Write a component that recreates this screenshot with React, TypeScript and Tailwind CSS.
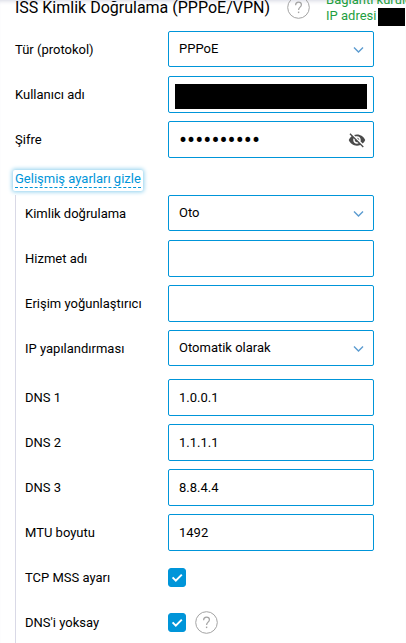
import { useState, type ReactNode } from "react"

const controlClass =
  "block w-full rounded-xs border border-[#0095d9] bg-white px-[10px] text-black outline-none"

function Chevron() {
  return (
    <svg
      className="pointer-events-none absolute top-1/2 right-[10px] -translate-y-1/2"
      width="11"
      height="7"
      viewBox="0 0 11 7"
      fill="none"
      stroke="#5b9bd0"
      strokeWidth="1.4"
    >
      <path d="M1 1l4.5 4.5L10 1" />
    </svg>
  )
}

function EyeOff() {
  return (
    <svg width="18" height="18" viewBox="0 0 24 24" fill="#4a4a4a">
      <path d="M12 7c2.76 0 5 2.24 5 5 0 .65-.13 1.26-.36 1.83l2.92 2.92c1.51-1.26 2.7-2.89 3.43-4.75-1.73-4.39-6-7.5-11-7.5-1.4 0-2.74.25-3.98.7l2.16 2.16C10.74 7.13 11.35 7 12 7zM2 4.27l2.28 2.28.46.46C3.08 8.3 1.78 10.02 1 12c1.73 4.39 6 7.5 11 7.5 1.55 0 3.03-.3 4.38-.84l.42.42L19.73 22 21 20.73 3.27 3 2 4.27zM7.53 9.8l1.55 1.55c-.05.21-.08.43-.08.65 0 1.66 1.34 3 3 3 .22 0 .44-.03.65-.08l1.55 1.55c-.67.33-1.41.53-2.2.53-2.76 0-5-2.24-5-5 0-.79.2-1.53.53-2.2zm4.31-.78l3.15 3.15.02-.16c0-1.66-1.34-3-3-3l-.17.01z" />
    </svg>
  )
}

function HelpButton() {
  return (
    <button type="button" aria-label="Yardım" className="shrink-0">
      <svg width="23" height="23" viewBox="0 0 23 23" fill="none" stroke="#a3a3a3">
        <circle cx="11.5" cy="11.5" r="10.8" />
        <path d="M8.6 9.2c0-1.9 1.2-3.1 2.9-3.1s2.9 1.1 2.9 2.7c0 2.3-2.8 2.5-2.8 5.1" strokeWidth="1.2" />
        <path d="M11.6 15.6v1.5" strokeWidth="1.4" />
      </svg>
    </button>
  )
}

function Row({ id, label, nested = false, children }: { id: string; label: string; nested?: boolean; children: ReactNode }) {
  return (
    <div className="flex h-[37px] items-center">
      <label htmlFor={id} className={nested ? "w-[143px] shrink-0" : "w-[153px] shrink-0"}>
        {label}
      </label>
      <div className="relative flex min-w-0 flex-1 items-center gap-[9px]">{children}</div>
    </div>
  )
}

function SelectBox({ id, options }: { id: string; options: string[] }) {
  return (
    <>
      <select id={id} className={`${controlClass} mb-px h-9 appearance-none text-[13px]`}>
        {options.map((option) => (
          <option key={option}>{option}</option>
        ))}
      </select>
      <Chevron />
    </>
  )
}

function TextBox({ id, value = "" }: { id: string; value?: string }) {
  return <input id={id} type="text" defaultValue={value} className={`${controlClass} h-[37px] text-[13px]`} />
}

function CheckBox({ id }: { id: string }) {
  return (
    <span className="relative flex h-[19px] w-[18px]">
      <input
        id={id}
        type="checkbox"
        defaultChecked
        className="peer h-full w-full appearance-none rounded-[3px] border border-[#0095d9] bg-white checked:bg-[#0095d9]"
      />
      <svg
        className="pointer-events-none absolute inset-0 hidden peer-checked:block"
        width="18"
        height="19"
        viewBox="0 0 18 19"
        fill="none"
        stroke="#fff"
        strokeWidth="2"
      >
        <path d="M4.6 9.4l3.2 3.2 6-6" />
      </svg>
    </span>
  )
}

export default function App() {
  const [advanced, setAdvanced] = useState(true)
  const [showPassword, setShowPassword] = useState(false)

  return (
    <main className="flex min-h-screen flex-col overflow-hidden bg-white pl-[15px] font-[Roboto,sans-serif] text-[13px] leading-4 text-black shadow-[inset_0_4px_4px_-3px_#d5d7e3]">
      <header className="flex h-6 items-end">
        <h1 className="shrink-0 self-start text-[16px] leading-4">ISS Kimlik Doğrulama (PPPoE/VPN)</h1>
        <div className="ml-[17px] flex h-7 shrink-0 items-start">
          <HelpButton />
        </div>
        <div className="ml-4 min-w-0 flex-1 whitespace-nowrap text-[#1f9f3f]">
          <p>Bağlantı kuruldu</p>
          <p className="flex h-4 items-start">
            IP adresi
            <span className="ml-[2px] h-[18px] w-[27px] shrink-0 bg-black" />
          </p>
        </div>
      </header>

      <form className="flex flex-1 flex-col pt-[7px]">
        <div className="flex flex-col gap-2 pr-8">
          <Row id="protocol" label="Tür (protokol)">
            <SelectBox id="protocol" options={["PPPoE", "PPTP", "L2TP"]} />
          </Row>
          <Row id="username" label="Kullanıcı adı">
            <TextBox id="username" />
            <span className="pointer-events-none absolute inset-x-[7px] top-[8px] bottom-[4px] bg-black" />
          </Row>
          <Row id="password" label="Şifre">
            <input
              id="password"
              type={showPassword ? "text" : "password"}
              defaultValue="0123456789"
              className={`${controlClass} h-[37px] ${showPassword ? "text-[13px]" : "text-[24px]"}`}
            />
            <button
              type="button"
              aria-label="Şifreyi göster"
              onClick={() => setShowPassword(!showPassword)}
              className="absolute right-[8px]"
            >
              <EyeOff />
            </button>
          </Row>
        </div>

        <button
          type="button"
          onClick={() => setAdvanced(!advanced)}
          className="mt-[12px] -ml-[2px] self-start rounded-xs px-[2px] pt-[1px] pb-[3px] text-[#0095d9] shadow-[0_0_4px_1px_#8fd0ee]"
        >
          <span className="block border-b border-dashed border-[#0095d9]">
            {advanced ? "Gelişmiş ayarları gizle" : "Gelişmiş ayarları göster"}
          </span>
        </button>

        {advanced && (
          <div className="mt-1 flex flex-1 flex-col gap-2 border-l border-[#d9d9e6] pr-8 pl-[9px]">
            <Row nested id="auth" label="Kimlik doğrulama">
              <SelectBox id="auth" options={["Oto", "PAP", "CHAP"]} />
            </Row>
            <Row nested id="service" label="Hizmet adı">
              <TextBox id="service" />
            </Row>
            <Row nested id="concentrator" label="Erişim yoğunlaştırıcı">
              <TextBox id="concentrator" />
            </Row>
            <Row nested id="ip" label="IP yapılandırması">
              <SelectBox id="ip" options={["Otomatik olarak", "Manuel"]} />
            </Row>
            <div className="mt-1 flex flex-col gap-2">
              <Row nested id="dns1" label="DNS 1">
                <TextBox id="dns1" value="1.0.0.1" />
              </Row>
              <Row nested id="dns2" label="DNS 2">
                <TextBox id="dns2" value="1.1.1.1" />
              </Row>
              <Row nested id="dns3" label="DNS 3">
                <TextBox id="dns3" value="8.8.4.4" />
              </Row>
              <Row nested id="mtu" label="MTU boyutu">
                <TextBox id="mtu" value="1492" />
              </Row>
              <Row nested id="mss" label="TCP MSS ayarı">
                <CheckBox id="mss" />
              </Row>
              <Row nested id="ignore-dns" label="DNS'i yoksay">
                <CheckBox id="ignore-dns" />
                <HelpButton />
              </Row>
            </div>
          </div>
        )}
      </form>
    </main>
  )
}
